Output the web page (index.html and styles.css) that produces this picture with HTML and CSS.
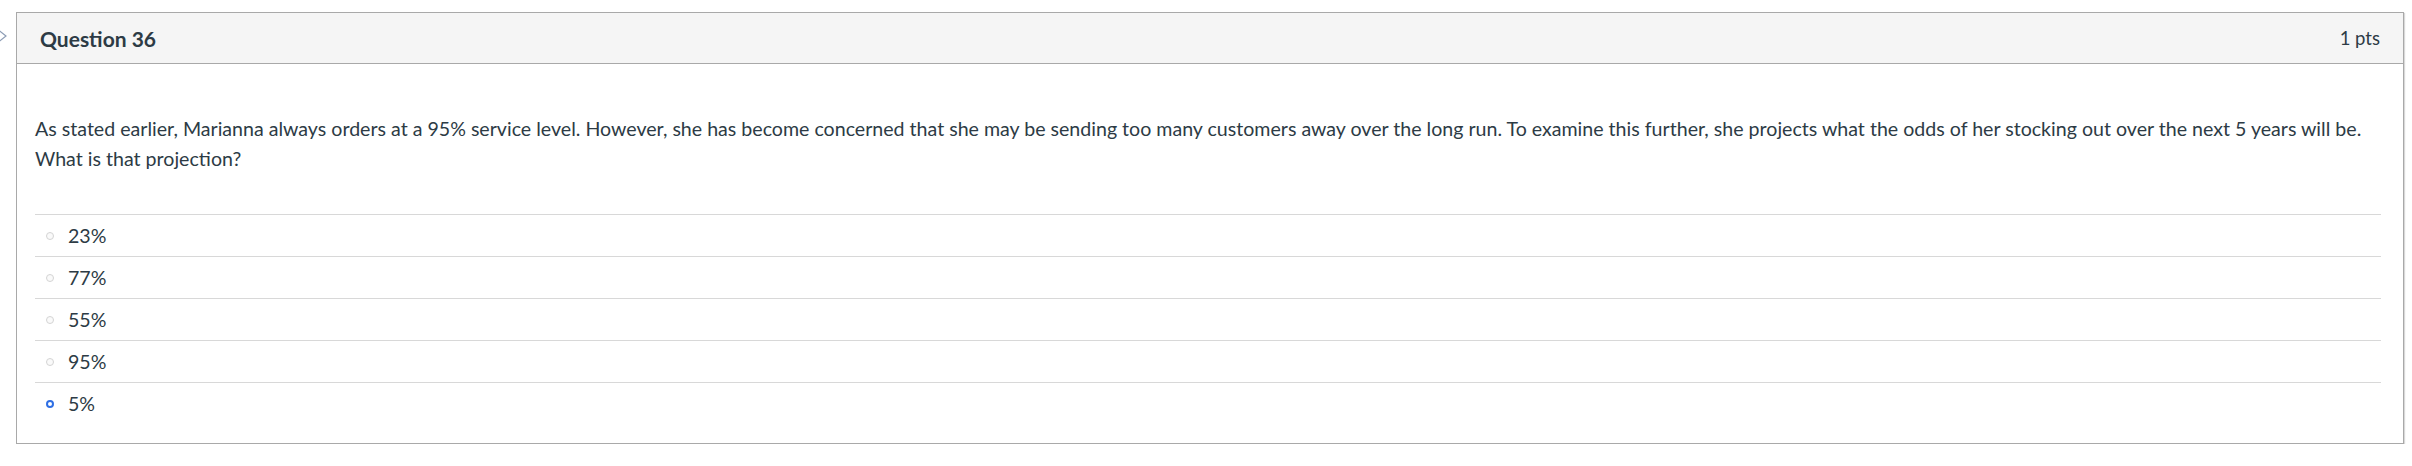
FILE: index.html
```html
<!DOCTYPE html>
<html>
<head>
<meta charset="utf-8">
<link rel="stylesheet" href="styles.css">
</head>
<body>
<div class="page">
  <svg class="flag" width="10" height="18" viewBox="0 0 10 18"><path d="M-4 1 L6 9 L-4 17" fill="none" stroke="#8d9db5" stroke-width="1.2"/></svg>
  <div class="question">
    <div class="q-header">
      <span class="q-title">Question 36</span>
      <span class="q-pts">1 pts</span>
    </div>
    <div class="q-body">
      <p class="q-text">As stated earlier, Marianna always orders at a 95% service level. However, she has become concerned that she may be sending too many customers away over the long run. To examine this further, she projects what the odds of her stocking out over the next 5 years will be. What is that projection?</p>
      <ul class="answers">
        <li class="answer"><span class="radio"></span><span class="label">23%</span></li>
        <li class="answer"><span class="radio"></span><span class="label">77%</span></li>
        <li class="answer"><span class="radio"></span><span class="label">55%</span></li>
        <li class="answer"><span class="radio"></span><span class="label">95%</span></li>
        <li class="answer"><span class="radio checked"></span><span class="label">5%</span></li>
      </ul>
    </div>
  </div>
</div>
</body>
</html>
```
FILE: styles.css
```css
html, body {
  margin: 0;
  padding: 0;
  background: #fff;
}
body {
  font-family: Lato, "Liberation Sans", sans-serif;
  color: #2d3b45;
}
.page {
  position: relative;
  padding: 12px 6px 0 16px;
}
.flag {
  position: absolute;
  left: 0;
  top: 27px;
}
.question {
  border: 1px solid #a9a9a9;
  box-shadow: 1px 1px 1px rgba(0,0,0,0.15);
  width: 2388px;
  height: 432px;
  box-sizing: border-box;
}
.q-header {
  display: flex;
  justify-content: space-between;
  align-items: center;
  height: 51px;
  box-sizing: border-box;
  padding: 0 23px 0 23px;
  background: #f5f5f5;
  border-bottom: 1px solid #a9a9a9;
}
.q-title {
  font-weight: 700;
  font-size: 21px;
  color: #2d3b45;
}
.q-pts {
  font-size: 18.5px;
  color: #2d3b45;
}
.q-body {
  padding: 0 22px 0 18px;
}
.q-text {
  margin: 0;
  padding-top: 50px;
  font-size: 19.6px;
  line-height: 30px;
  height: 100px;
}
.answers {
  list-style: none;
  margin: 0;
  padding: 0;
}
.answer {
  display: flex;
  align-items: center;
  height: 42px;
  border-top: 1px solid #d8d8d8;
  box-sizing: border-box;
  font-size: 19.6px;
}
.radio {
  width: 8px;
  height: 8px;
  border: 1px solid #d4d4d4;
  border-radius: 50%;
  box-sizing: border-box;
  margin-left: 11px;
  margin-right: 14px;
  background: #fafafa;
}
.radio.checked {
  border: 2.5px solid #2f6fe4;
  background: #fff;
}
```
